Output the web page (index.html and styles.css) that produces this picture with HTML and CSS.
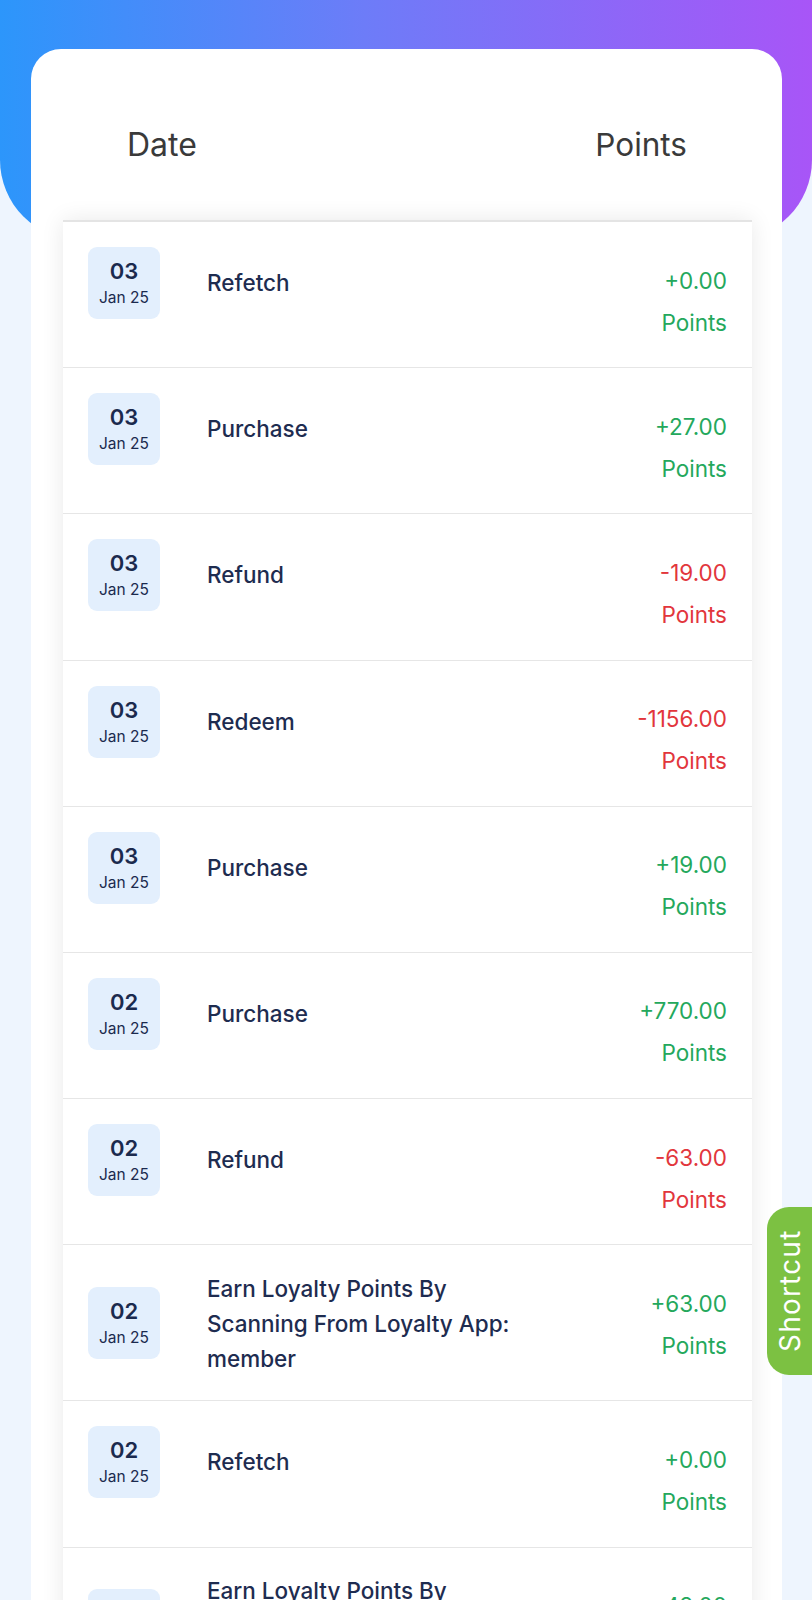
FILE: index.html
```html
<!DOCTYPE html>
<html lang="en">
<head>
<meta charset="utf-8">
<title>Points History</title>
<link rel="stylesheet" href="styles.css">
</head>
<body>
<div class="hero"></div>
<main class="card">
  <div class="head">
    <span>Date</span>
    <span class="head-pts">Points</span>
  </div>
  <div class="list">
    <div class="row">
      <div class="badge"><b>03</b><span>Jan 25</span></div>
      <div class="title">Refetch</div>
      <div class="pts plus">+0.00<br>Points</div>
    </div>
    <div class="row">
      <div class="badge"><b>03</b><span>Jan 25</span></div>
      <div class="title">Purchase</div>
      <div class="pts plus">+27.00<br>Points</div>
    </div>
    <div class="row">
      <div class="badge"><b>03</b><span>Jan 25</span></div>
      <div class="title">Refund</div>
      <div class="pts minus">-19.00<br>Points</div>
    </div>
    <div class="row">
      <div class="badge"><b>03</b><span>Jan 25</span></div>
      <div class="title">Redeem</div>
      <div class="pts minus">-1156.00<br>Points</div>
    </div>
    <div class="row">
      <div class="badge"><b>03</b><span>Jan 25</span></div>
      <div class="title">Purchase</div>
      <div class="pts plus">+19.00<br>Points</div>
    </div>
    <div class="row">
      <div class="badge"><b>02</b><span>Jan 25</span></div>
      <div class="title">Purchase</div>
      <div class="pts plus">+770.00<br>Points</div>
    </div>
    <div class="row">
      <div class="badge"><b>02</b><span>Jan 25</span></div>
      <div class="title">Refund</div>
      <div class="pts minus">-63.00<br>Points</div>
    </div>
    <div class="row tall">
      <div class="badge"><b>02</b><span>Jan 25</span></div>
      <div class="title">Earn Loyalty Points By Scanning From Loyalty App: member</div>
      <div class="pts plus">+63.00<br>Points</div>
    </div>
    <div class="row">
      <div class="badge"><b>02</b><span>Jan 25</span></div>
      <div class="title">Refetch</div>
      <div class="pts plus">+0.00<br>Points</div>
    </div>
    <div class="row tall">
      <div class="badge"><b>02</b><span>Jan 25</span></div>
      <div class="title">Earn Loyalty Points By Scanning From Loyalty App: member</div>
      <div class="pts plus">+48.00<br>Points</div>
    </div>
  </div>
</main>
<div class="shortcut">Shortcut</div>
</body>
</html>
```
FILE: styles.css
```css
* { box-sizing: border-box; }
html, body { margin: 0; padding: 0; }
body {
  background: #eef5fe;
  font-family: Inter, "Noto Sans", sans-serif;
  color: #1d2b4f;
}
.hero {
  height: 240px;
  background: linear-gradient(90deg, #2c96fb 0%, #6d7cf8 45%, #a855f7 100%);
  border-radius: 0 0 80px 80px;
}
.card {
  position: relative;
  margin: -191px 30px 0 31px;
  background: #fff;
  border-radius: 30px 30px 0 0;
  padding: 0 30px 0 32px;
}
.head {
  display: flex;
  justify-content: space-between;
  align-items: center;
  padding: 74px 65px 53px 64px;
  height: 171px;
  font-size: 32px;
  line-height: 44px;
  color: #3a3a3a;
  font-weight: 400;
}
.head-pts { font-size: 31.5px; }
.list {
  border-top: 2px solid #e4e4e4;
  box-shadow: 0 0 22px rgba(0, 0, 0, 0.09);
  background: #fff;
}
.row {
  display: flex;
  align-items: flex-start;
  height: 146.2px;
  border-bottom: 1.5px solid #e6e6e6;
  padding: 0 25px 0 25px;
}
.badge {
  width: 72px;
  height: 72px;
  margin-top: 25px;
  background: #e3effd;
  border-radius: 9px;
  display: flex;
  flex-direction: column;
  align-items: center;
  justify-content: center;
  color: #1b2a4e;
  flex: none;
}
.badge b {
  font-size: 22px;
  font-weight: 600;
  line-height: 29px;
}
.badge span {
  font-size: 15.5px;
  line-height: 23px;
}
.title {
  margin-left: 47px;
  margin-top: 43px;
  width: 325px;
  font-size: 22.5px;
  font-weight: 500;
  line-height: 35px;
  color: #1e2c50;
}
.pts {
  margin-left: auto;
  margin-top: 37.5px;
  text-align: right;
  font-size: 22.5px;
  line-height: 42px;
}
.plus { color: #24a85c; }
.minus { color: #e2363c; }
.tall { height: 156px; }
.tall .badge { margin-top: 41.5px; }
.tall .title { margin-top: 25.5px; }
.shortcut {
  position: absolute;
  right: 0;
  top: 1207px;
  width: 45px;
  height: 168px;
  background: #7cc142;
  color: #fff;
  font-size: 28px;
  letter-spacing: 1.2px;
  writing-mode: vertical-rl;
  transform: rotate(180deg);
  border-radius: 0 22px 22px 0;
  display: flex;
  align-items: center;
  justify-content: center;
}
```
